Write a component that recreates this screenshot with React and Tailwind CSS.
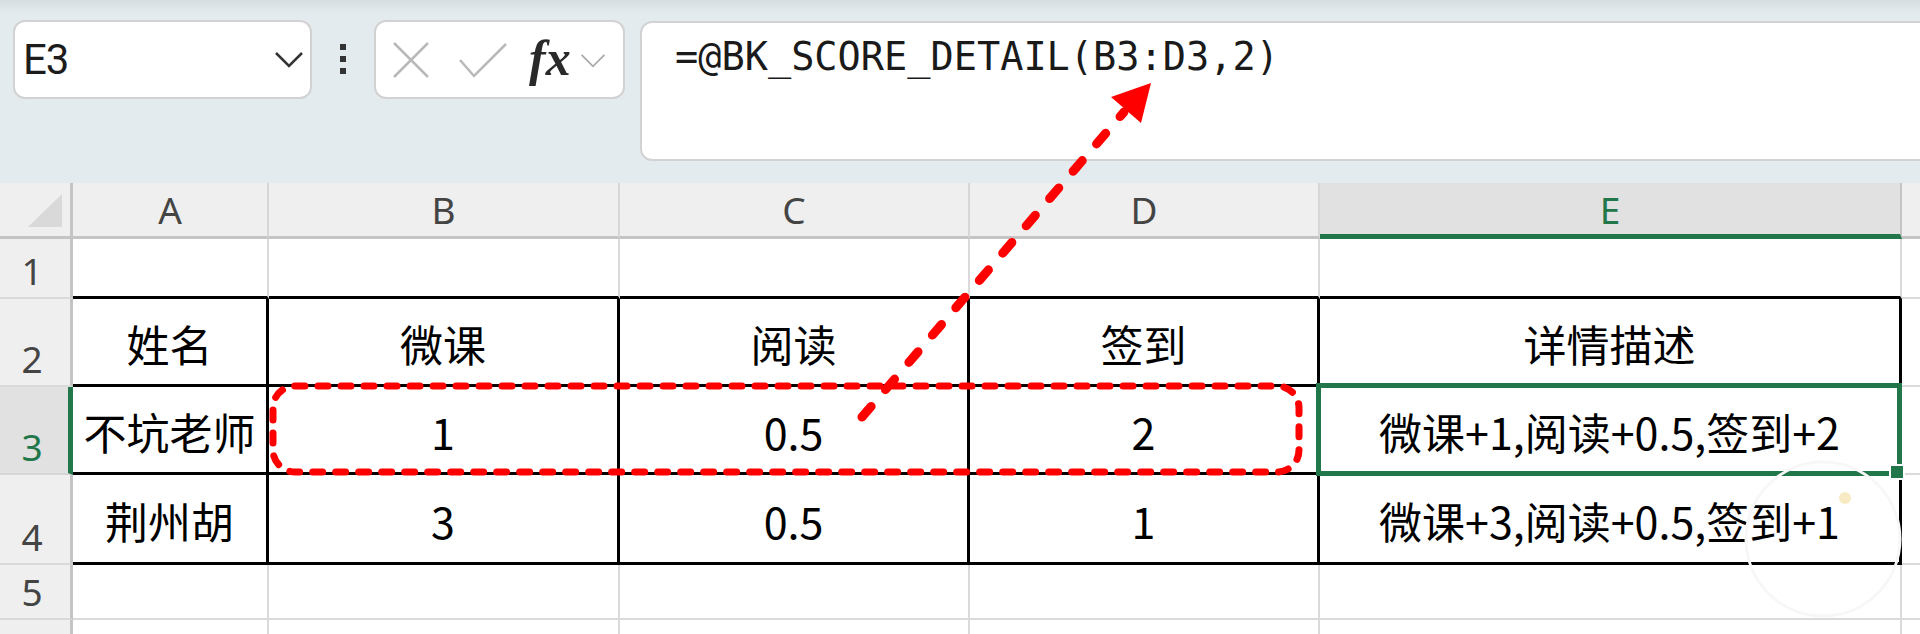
import React from "react";

// cell text rows (2..4)
const tableRows = [
  ["姓名", "微课", "阅读", "签到", "详情描述"],
  ["不坑老师", "1", "0.5", "2", "微课+1,阅读+0.5,签到+2"],
  ["荆州胡", "3", "0.5", "1", "微课+3,阅读+0.5,签到+1"],
];

const headFont = "font-['Noto_Sans',sans-serif] text-[37px] leading-none";
const cellFont = "font-['Noto_Sans_CJK_SC',sans-serif] text-[43px] leading-none text-black";

function RowHead({ n, active }) {
  return (
    <div
      className={
        active
          ? `flex items-end justify-center pr-[4px] pb-[8px] bg-[#e1e1e1] border-r-[5px] border-r-[#21764a] border-b-2 border-b-[#d6d6d6] text-[#21764a] ${headFont}`
          : `flex items-end justify-center pr-[6px] pb-[8px] bg-[#efefef] border-r-[3px] border-r-[#c4c4c4] border-b-2 border-b-[#d9d9d9] text-[#444] ${headFont}`
      }
    >
      {n}
    </div>
  );
}

function ColHead({ label, active }) {
  return (
    <div
      className={
        active
          ? `flex items-center justify-center pt-[2px] bg-[#e1e1e1] border-r-2 border-r-[#c4c4c4] border-b-[5px] border-b-[#21764a] text-[#21764a] ${headFont}`
          : `flex items-center justify-center bg-[#efefef] border-r-2 border-r-[#d6d6d6] border-b-[3px] border-b-[#c4c4c4] text-[#444] ${headFont}`
      }
    >
      {label}
    </div>
  );
}

function Chevron({ className, color = "#333", w = 2.5 }) {
  return (
    <svg viewBox="0 0 28 16" className={className} fill="none">
      <polyline points="1,1 14,14 27,1" stroke={color} strokeWidth={w} />
    </svg>
  );
}

function Toolbar() {
  return (
    <div className="relative h-[183px] bg-[#e4ebee] flex items-start pt-[20px]">
      <div className="absolute top-0 left-0 right-0 h-[14px] bg-linear-to-b from-[#d6dee1] to-[#e4ebee]" />
      {/* name box */}
      <div className="relative ml-[13px] w-[299px] h-[79px] rounded-[12px] border-2 border-[#d2d2d2] bg-white flex items-center justify-between pl-[8px] pr-[7px]">
        <span className="font-['Roboto',sans-serif] text-[42px] leading-none text-[#1c1c1c] tracking-[-1px]">E3</span>
        <Chevron className="w-[28px] h-[16px]" />
      </div>
      {/* more dots */}
      <div className="ml-[28px] mt-[24px] flex flex-col gap-[6px]">
        <div className="w-[6px] h-[6px] bg-[#333]" />
        <div className="w-[6px] h-[6px] bg-[#333]" />
        <div className="w-[6px] h-[6px] bg-[#333]" />
      </div>
      {/* cancel / enter / fx */}
      <div className="relative ml-[28px] w-[251px] h-[79px] rounded-[12px] border-2 border-[#d2d2d2] bg-white flex items-center pl-[17px]">
        <svg viewBox="0 0 36 36" className="w-[36px] h-[36px]" fill="none">
          <line x1="1" y1="1" x2="35" y2="35" stroke="#b9b9b9" strokeWidth="2.5" />
          <line x1="35" y1="1" x2="1" y2="35" stroke="#b9b9b9" strokeWidth="2.5" />
        </svg>
        <svg viewBox="0 0 48 36" className="ml-[30px] w-[48px] h-[36px]" fill="none">
          <polyline points="1,18 15,34 47,2" stroke="#b9b9b9" strokeWidth="2.5" />
        </svg>
        <span className="ml-[22px] font-['Liberation_Serif',serif] italic font-bold text-[50px] leading-none text-[#2a2a2a] -mt-[4px]">fx</span>
        <Chevron className="ml-[8px] mt-[2px] w-[28px] h-[14px]" color="#a8a8a8" w={2} />
      </div>
      {/* formula */}
      <div className="ml-[15px] mt-px flex-1 -mr-[30px] h-[140px] rounded-[12px] border-2 border-[#d2d2d2] bg-white pl-[33px] pt-[15px]">
        <span className="font-['DejaVu_Sans_Mono',monospace] text-[38.6px] leading-none text-[#1a1a1a] whitespace-pre">
          =@BK_SCORE_DETAIL(B3:D3,2)
        </span>
      </div>
    </div>
  );
}

function Sheet() {
  return (
    <div className="grid h-[451px] grid-cols-[73px_196px_351px_350px_350px_582px_1fr] grid-rows-[56px_60px_88px_88px_90px_55px_1fr]">
      {/* header row */}
      <div className="flex items-end justify-end pr-[8px] pb-[9px] bg-[#efefef] border-r-[3px] border-r-[#c4c4c4] border-b-[3px] border-b-[#c4c4c4]">
        <svg viewBox="0 0 34 33" className="w-[34px] h-[33px]">
          <polygon points="34,0 34,33 0,33" fill="#d9d9d9" />
        </svg>
      </div>
      <ColHead label="A" />
      <ColHead label="B" />
      <ColHead label="C" />
      <ColHead label="D" />
      <ColHead label="E" active />
      <div className="bg-[#efefef] border-b-[3px] border-b-[#c4c4c4]" />

      {/* row 1 */}
      <RowHead n="1" />
      <div className="border-r-2 border-r-[#dadada] border-b-[3px] border-b-black" />
      <div className="border-r-2 border-r-[#dadada] border-b-[3px] border-b-black" />
      <div className="border-r-2 border-r-[#dadada] border-b-[3px] border-b-black" />
      <div className="border-r-2 border-r-[#dadada] border-b-[3px] border-b-black" />
      <div className="border-r-2 border-r-[#dadada] border-b-[3px] border-b-black" />
      <div className="border-b-2 border-b-[#dadada]" />

      {/* rows 2..4 */}
      {tableRows.map((row, ri) => (
        <React.Fragment key={ri}>
          <RowHead n={String(ri + 2)} active={ri === 1} />
          {row.map((txt, ci) => (
            <div
              key={ci}
              className={`relative flex items-center justify-center pt-[4px] border-r-[3px] border-b-[3px] border-black ${cellFont}`}
            >
              {txt}
              {ri === 1 && ci === 4 && (
                <div className="absolute z-10 -left-[4px] -top-[4px] -right-[3px] -bottom-[4px] border-[5px] border-[#21764a]">
                  <div className="absolute -right-[8px] -bottom-[9px] w-[16px] h-[16px] bg-[#21764a] border-2 border-white" />
                </div>
              )}
            </div>
          ))}
          <div className="border-b-2 border-b-[#dadada]" />
        </React.Fragment>
      ))}

      {/* row 5 */}
      <RowHead n="5" />
      <div className="border-r-2 border-b-2 border-[#dadada]" />
      <div className="border-r-2 border-b-2 border-[#dadada]" />
      <div className="border-r-2 border-b-2 border-[#dadada]" />
      <div className="border-r-2 border-b-2 border-[#dadada]" />
      <div className="border-r-2 border-b-2 border-[#dadada]" />
      <div className="border-b-2 border-[#dadada]" />

      {/* row 6 (cut off) */}
      <div className="bg-[#efefef] border-r-[3px] border-r-[#c4c4c4]" />
      <div className="border-r-2 border-[#dadada]" />
      <div className="border-r-2 border-[#dadada]" />
      <div className="border-r-2 border-[#dadada]" />
      <div className="border-r-2 border-[#dadada]" />
      <div className="border-r-2 border-[#dadada]" />
      <div />
    </div>
  );
}

// red hand-drawn annotation over the sheet
function Annotation() {
  return (
    <svg
      className="absolute inset-0 z-20 pointer-events-none"
      width="1920"
      height="634"
      viewBox="0 0 1920 634"
      fill="none"
    >
      <circle cx="1823" cy="539" r="77" stroke="#f7f7f7" strokeWidth="3" />
      <circle cx="1845" cy="498" r="6" fill="#f8ebc4" />
      <rect
        x="273"
        y="386"
        width="1026"
        height="86"
        rx="22"
        stroke="#ff0000"
        strokeWidth="7"
        strokeDasharray="10 13"
        strokeLinecap="round"
      />
      <line
        x1="862"
        y1="417"
        x2="1124"
        y2="112"
        stroke="#ff0000"
        strokeWidth="9"
        strokeDasharray="14 22"
        strokeLinecap="round"
      />
      <polygon points="1151,83 1111,97 1141,123" fill="#ff0000" />
    </svg>
  );
}

export default function App() {
  return (
    <div className="relative w-[1920px] h-[634px] overflow-hidden bg-white">
      <Toolbar />
      <Sheet />
      <Annotation />
    </div>
  );
}
